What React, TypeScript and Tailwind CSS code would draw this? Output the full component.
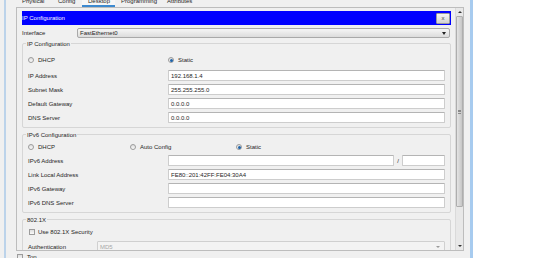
import React from 'react';

const Radio: React.FC<{ checked?: boolean }> = ({ checked }) => (
    <span className="w-[6px] h-[6px] rounded-full border border-[#9c9c9c] bg-linear-to-b from-[#dedede] to-[#fafafa] flex items-center justify-center shrink-0">
        {checked && <span className="w-[3px] h-[3px] rounded-full bg-[#1d62a8]" />}
    </span>
);

const Field: React.FC<{ value?: string; className?: string }> = ({ value, className }) => (
    <div className={`h-[11px] bg-white border border-[#cdcdcd] border-t-[#b4b4b4] rounded-[1px] flex items-center pl-[2px] ${className ?? ''}`}>
        {value}
    </div>
);

const Row: React.FC<{ label: string; value?: string }> = ({ label, value }) => (
    <div className="flex items-center h-[11px] shrink-0">
        <span className="w-[140px]">{label}</span>
        <Field value={value} className="w-[277px]" />
    </div>
);

const Group: React.FC<{ title: string; className?: string; children: React.ReactNode }> = ({ title, className, children }) => (
    <div className={`relative shrink-0 w-[429px] border border-[#d6d6d6] rounded-[2px] pl-[5px] pr-[5px] flex flex-col ${className ?? ''}`}>
        <span className="absolute left-[3px] top-[-3px] px-[1px] bg-[#f0f0f0] leading-[6px]">{title}</span>
        {children}
    </div>
);

const tabs = [
    { name: 'Physical', w: 'w-[36px]' },
    { name: 'Config', w: 'w-[30px]' },
    { name: 'Desktop', w: 'w-[33px]' },
    { name: 'Programming', w: 'w-[46px]' },
    { name: 'Attributes', w: 'w-[40px]' },
];

const App: React.FC = () => {
    return (
        <div className="w-[554px] h-[258px] bg-white flex overflow-hidden font-['Liberation_Sans',Arial,sans-serif] text-[6px] leading-none text-[#262626]">
            <div className="w-[470px] h-full bg-[#f0f0f0] flex">
                {/* left edge */}
                <div className="w-[16px] h-full flex">
                    <div className="ml-[4px] w-[2px] h-full bg-[#bcd3ea]" />
                </div>

                <div className="w-[454px] h-full flex flex-col">
                    {/* tabs */}
                    <div className="h-[7px] shrink-0 flex overflow-hidden">
                        {tabs.map(t => (
                            <div key={t.name} className={`${t.w} h-[7px] flex flex-col pl-[6px] ${t.name === 'Desktop' ? 'bg-[#f7f7f7]' : ''}`}>
                                <span className="mt-[-2px] leading-[6px]">{t.name}</span>
                                {t.name === 'Desktop' && <div className="mt-auto ml-[-6px] h-[2px] bg-[#3d8ad0]" />}
                            </div>
                        ))}
                    </div>

                    {/* panel */}
                    <div className="w-[448px] h-[244px] shrink-0 border border-[#bdbdbd] flex">
                        <div className="w-[438px] h-full overflow-hidden pl-[5px] flex flex-col">
                            <div className="mt-[3px] shrink-0 w-[429px] h-[14px] bg-[#0000ff] flex items-center justify-between text-white">
                                <span>IP Configuration</span>
                                <div className="mr-[1px] w-[14px] h-[11px] border border-[#9a9a9a] rounded-[1px] bg-linear-to-b from-[#f4f4f4] to-[#d2d2d2] flex items-center justify-center text-[#444]">
                                    x
                                </div>
                            </div>

                            <div className="mt-[3px] shrink-0 w-[429px] h-[10px] flex items-center">
                                <span className="w-[55px]">Interface</span>
                                <div className="w-[373px] h-[10px] border border-[#a9a9a9] rounded-[2px] bg-linear-to-b from-[#f6f6f6] to-[#dcdcdc] flex items-center pl-[2px]">
                                    <span className="flex-1">FastEthernet0</span>
                                    <span className="mr-[3px] w-0 h-0 border-l-[2px] border-r-[2px] border-t-[3px] border-l-transparent border-r-transparent border-t-[#222]" />
                                </div>
                            </div>

                            <Group title="IP Configuration" className="mt-[5px] pt-[11px] pb-[4px]">
                                <div className="h-[10px] shrink-0 flex items-center">
                                    <div className="w-[140px] flex items-center gap-[4px]"><Radio /><span>DHCP</span></div>
                                    <div className="flex items-center gap-[4px]"><Radio checked /><span>Static</span></div>
                                </div>
                                <div className="mt-[5px] flex flex-col gap-[3px]">
                                    <Row label="IP Address" value="192.168.1.4" />
                                    <Row label="Subnet Mask" value="255.255.255.0" />
                                    <Row label="Default Gateway" value="0.0.0.0" />
                                    <Row label="DNS Server" value="0.0.0.0" />
                                </div>
                            </Group>

                            <Group title="IPv6 Configuration" className="mt-[6px] pt-[7px] pb-[4px]">
                                <div className="h-[10px] shrink-0 flex items-center">
                                    <div className="w-[102px] flex items-center gap-[4px]"><Radio /><span>DHCP</span></div>
                                    <div className="w-[106px] flex items-center gap-[4px]"><Radio /><span>Auto Config</span></div>
                                    <div className="flex items-center gap-[4px]"><Radio checked /><span>Static</span></div>
                                </div>
                                <div className="mt-[3px] flex flex-col gap-[3px]">
                                    <div className="flex items-center h-[11px] shrink-0">
                                        <span className="w-[140px]">IPv6 Address</span>
                                        <Field className="w-[226px]" />
                                        <span className="w-[8px] text-center">/</span>
                                        <Field className="w-[43px]" />
                                    </div>
                                    <Row label="Link Local Address" value="FE80::201:42FF:FE04:30A4" />
                                    <Row label="IPv6 Gateway" />
                                    <Row label="IPv6 DNS Server" />
                                </div>
                            </Group>

                            <Group title="802.1X" className="mt-[6px] pt-[7px] pb-[6px]">
                                <div className="h-[10px] shrink-0 flex items-center gap-[3px] pl-[1px]">
                                    <span className="w-[6px] h-[6px] border border-[#9c9c9c] bg-linear-to-b from-[#dedede] to-[#fafafa]" />
                                    <span>Use 802.1X Security</span>
                                </div>
                                <div className="mt-[4px] shrink-0 flex items-center h-[11px]">
                                    <span className="w-[69px]">Authentication</span>
                                    <div className="w-[348px] h-[11px] border border-[#d0d0d0] rounded-[1px] bg-[#f3f3f3] flex items-center pl-[2px] text-[#a8a8a8]">
                                        <span className="flex-1">MD5</span>
                                        <span className="mr-[4px] w-0 h-0 border-l-[2px] border-r-[2px] border-t-[2px] border-l-transparent border-r-transparent border-t-[#9a9a9a]" />
                                    </div>
                                </div>
                            </Group>
                        </div>

                        {/* scrollbar */}
                        <div className="w-[8px] h-full bg-[#e8e8e8] border-l border-[#dadada] flex flex-col items-center">
                            <div className="h-[8px] shrink-0 flex items-center justify-center">
                                <span className="w-0 h-0 border-l-[2px] border-r-[2px] border-b-[2px] border-l-transparent border-r-transparent border-b-[#333]" />
                            </div>
                            <div className="w-[7px] h-[191px] shrink-0 border border-[#aeaeae] rounded-[1px] bg-linear-to-r from-[#e4e4e4] to-[#c6c6c6] flex items-center justify-center">
                                <div className="w-[3px] h-[4px] border-y border-[#8a8a8a] flex items-center">
                                    <div className="w-full h-[1px] bg-[#8a8a8a]" />
                                </div>
                            </div>
                            <div className="flex-1" />
                            <div className="h-[8px] shrink-0 flex items-center justify-center">
                                <span className="w-0 h-0 border-l-[2px] border-r-[2px] border-t-[2px] border-l-transparent border-r-transparent border-t-[#333]" />
                            </div>
                        </div>
                    </div>

                    {/* below panel */}
                    <div className="h-[7px] shrink-0 flex items-start pt-[3px] pl-[1px] gap-[4px]">
                        <span className="w-[6px] h-[6px] border border-[#9c9c9c] bg-linear-to-b from-[#dedede] to-[#fafafa]" />
                        <span>Top</span>
                    </div>
                </div>
            </div>
            <div className="w-[3px] h-full bg-[#a7cbef]" />
            <div className="flex-1 h-full bg-white" />
        </div>
    );
};

export default App;
